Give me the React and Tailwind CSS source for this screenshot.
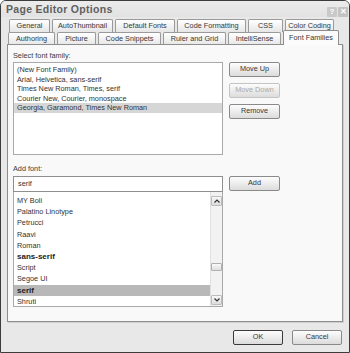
import React from "react";

const font = { fontFamily: '"Liberation Sans", Arial, sans-serif' };

function Tab({ w, children, selected }) {
  if (selected) {
    return (
      <div
        className={`h-[15px] -mt-[2px] bg-[#fbfbfb] border border-b-0 border-[#8e8e8e] rounded-t-[2px] flex items-center justify-center text-[7.3px] text-[#383838] relative z-10`}
        style={{ width: w }}
      >
        {children}
      </div>
    );
  }
  return (
    <div
      className="h-[13px] bg-gradient-to-b from-[#ffffff] to-[#e6e6e6] border border-b-0 border-[#9a9a9a] rounded-t-[2px] flex items-center justify-center text-[7.3px] text-[#383838]"
      style={{ width: w }}
    >
      {children}
    </div>
  );
}

function Btn({ children, disabled, def, w = 51 }) {
  return (
    <div
      className={`h-[15px] rounded-[2px] flex items-center justify-center text-[7.3px] bg-gradient-to-b from-[#fdfdfd] to-[#dcdcdc] ${
        disabled
          ? "border border-[#c4c4c4] text-[#a8a8a8]"
          : def
          ? "border border-[#3a3a3a] text-[#383838]"
          : "border border-[#8a8a8a] text-[#383838]"
      }`}
      style={{ width: w }}
    >
      {children}
    </div>
  );
}

export default function App() {
  const list1 = [
    "(New Font Family)",
    "Arial, Helvetica, sans-serif",
    "Times New Roman, Times, serif",
    "Courier New, Courier, monospace",
    "Georgia, Garamond, Times New Roman",
  ];
  const list2 = [
    ["MY Boli"],
    ["Palatino Linotype"],
    ["Petrucci"],
    ["Raavi"],
    ["Roman"],
    ["sans-serif", "b"],
    ["Script"],
    ["Segoe UI"],
    ["serif", "bs"],
    ["Shruti"],
  ];
  return (
    <div
      className="w-[350px] h-[353px] bg-[#e8e8e8] border border-[#3c3c3c] rounded-tl-[6px] rounded-tr-[6px] flex flex-col overflow-hidden"
      style={font}
    >
      {/* title bar */}
      <div className="h-[16px] flex items-center pl-[5px] pr-[1px] bg-gradient-to-b from-[#ececec] to-[#e2e2e2]">
        <div className="text-[10.5px] font-bold text-[#606060] tracking-[0.3px] flex-1 pt-[1px]">
          Page Editor Options
        </div>
        <div className="flex gap-[1px] mt-[5px]">
          <div className="w-[10px] h-[10px] bg-[#c9c9c9] rounded-[1px] text-white text-[8px] font-bold flex items-center justify-center leading-none">
            ?
          </div>
          <div className="w-[10px] h-[10px] bg-[#c3c3c3] rounded-[1px] text-white text-[8px] font-bold flex items-center justify-center leading-none">
            ✕
          </div>
        </div>
      </div>

      {/* tabs */}
      <div className="flex flex-col pt-[2px]">
        <div className="flex gap-[2px] pl-[8px]">
          <Tab w={41}>General</Tab>
          <Tab w={61}>AutoThumbnail</Tab>
          <Tab w={60}>Default Fonts</Tab>
          <Tab w={69}>Code Formatting</Tab>
          <Tab w={35}>CSS</Tab>
          <Tab w={49}>Color Coding</Tab>
        </div>
        <div className="flex gap-[2px] pl-[7px] items-end">
          <Tab w={47}>Authoring</Tab>
          <Tab w={39}>Picture</Tab>
          <Tab w={63}>Code Snippets</Tab>
          <Tab w={63}>Ruler and Grid</Tab>
          <Tab w={53}>IntelliSense</Tab>
          <Tab w={56} selected>
            Font Families
          </Tab>
        </div>
      </div>

      {/* panel */}
      <div className="mx-[6px] -mt-[1px] h-[278px] bg-[#f9f9f9] border border-[#8e8e8e] shadow-[1px_1px_0_#cfcfcf] flex flex-col px-[5px]">
        <div className="text-[7.3px] text-[#3a3a3a] mt-[6px] leading-[10px]">Select font family:</div>
        <div className="flex mt-[1px]">
          <div className="w-[210px] h-[93px] bg-white border border-[#a9a9a9] pt-[2px] text-[7.3px] text-[#333]">
            {list1.map((t, i) => (
              <div
                key={i}
                className={`leading-[9.5px] h-[9.5px] pl-[3px] ${i === 4 ? "bg-[#d6d6d6]" : ""}`}
              >
                {t}
              </div>
            ))}
          </div>
          <div className="flex flex-col gap-[6px] ml-[6px]">
            <Btn>Move Up</Btn>
            <Btn disabled>Move Down</Btn>
            <Btn>Remove</Btn>
          </div>
        </div>

        <div className="text-[7.3px] text-[#3a3a3a] mt-[9px] leading-[10px]">Add font:</div>
        <div className="flex mt-[2px]">
          <div className="flex flex-col w-[210px]">
            <div className="h-[16px] bg-white border border-[#8f8f8f] flex items-center pl-[4px] text-[7.3px] text-[#333]">
              serif
            </div>
            <div className="h-[115px] bg-white border border-t-0 border-[#a9a9a9] flex">
              <div className="flex-1 pt-[3px] text-[7.3px] text-[#333]">
                {list2.map(([t, s], i) => (
                  <div
                    key={i}
                    className={`h-[11.2px] leading-[11.2px] pl-[3px] ${
                      s ? "font-bold text-[8px] text-[#222]" : ""
                    } ${s === "bs" ? "bg-[#b8b8b8]" : ""}`}
                  >
                    {t}
                  </div>
                ))}
              </div>
              <div className="w-[12px] bg-[#f2f2f2] border-l border-[#e0e0e0] flex flex-col items-center pt-[4px] pb-[1px]">
                <div className="w-[11px] h-[10px] bg-gradient-to-b from-[#f8f8f8] to-[#dcdcdc] border border-[#bdbdbd] rounded-[1px] flex items-center justify-center">
                  <svg width="6" height="4" viewBox="0 0 6 4">
                    <path d="M0.5 3.5 L3 1 L5.5 3.5" stroke="#333" strokeWidth="1.2" fill="none" />
                  </svg>
                </div>
                <div className="flex-1 w-full relative flex flex-col">
                  <div className="h-[57px]" />
                  <div className="w-[11px] h-[8px] bg-gradient-to-b from-[#fafafa] to-[#dedede] border border-[#b0b0b0] rounded-[1px]" />
                </div>
                <div className="w-[11px] h-[10px] bg-gradient-to-b from-[#f8f8f8] to-[#dcdcdc] border border-[#bdbdbd] rounded-[1px] flex items-center justify-center">
                  <svg width="6" height="4" viewBox="0 0 6 4">
                    <path d="M0.5 0.5 L3 3 L5.5 0.5" stroke="#333" strokeWidth="1.2" fill="none" />
                  </svg>
                </div>
              </div>
            </div>
          </div>
          <div className="ml-[6px]">
            <Btn>Add</Btn>
          </div>
        </div>
      </div>

      {/* bottom buttons */}
      <div className="flex justify-end gap-[9px] pr-[7px] mt-[8px]">
        <Btn def w={50}>OK</Btn>
        <Btn w={50}>Cancel</Btn>
      </div>
    </div>
  );
}
